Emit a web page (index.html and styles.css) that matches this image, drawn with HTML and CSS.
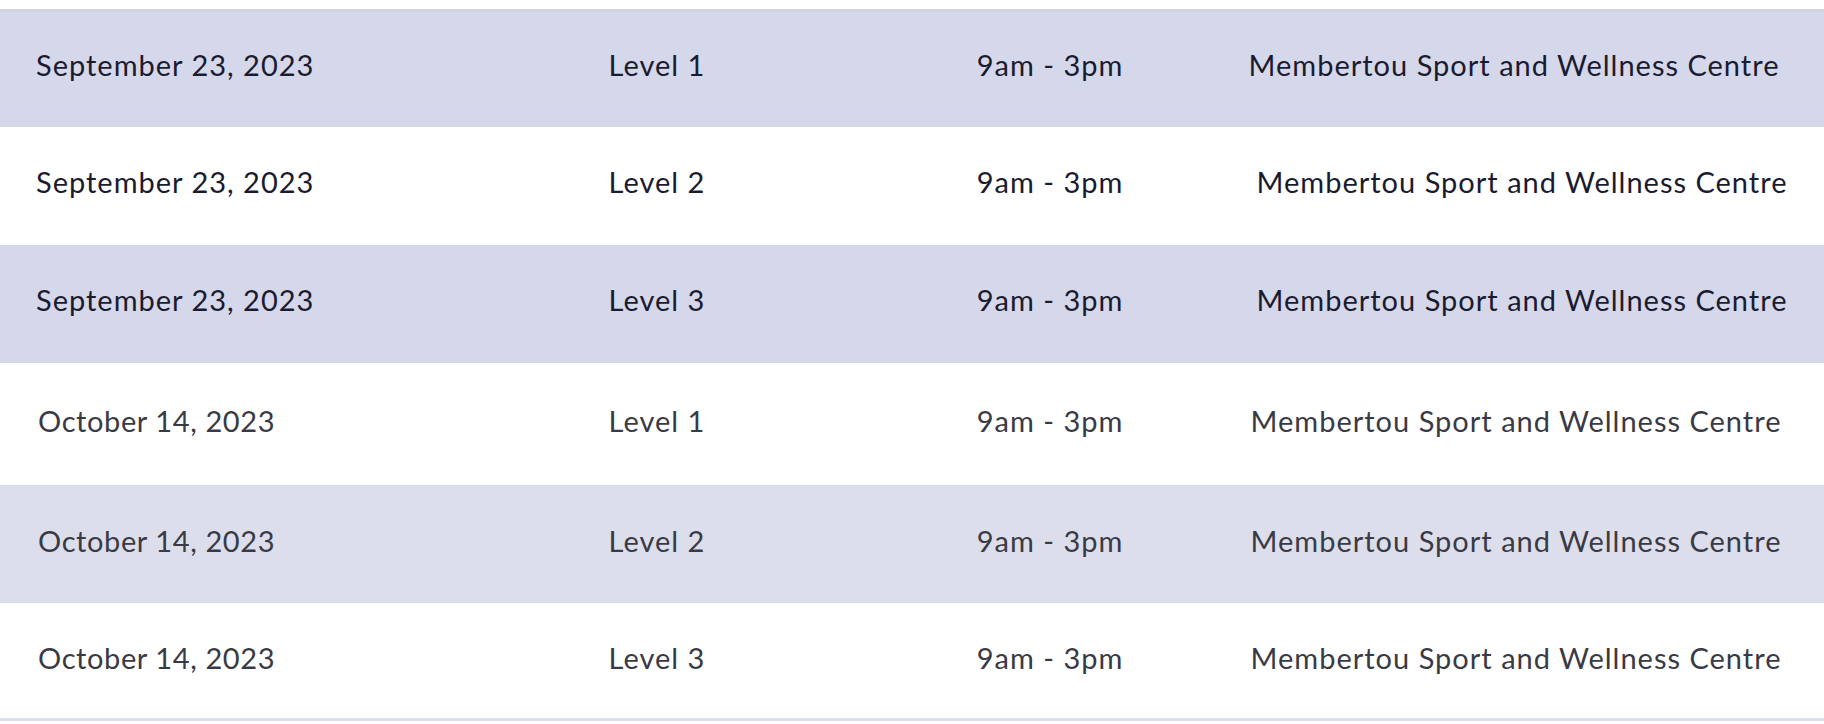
FILE: index.html
```html
<!DOCTYPE html>
<html>
<head>
<meta charset="utf-8">
<link rel="stylesheet" href="styles.css">
</head>
<body>
<div class="page">
  <div class="schedule schedule--sept">
    <div class="row row--shaded row--first">
      <div class="cell cell--date">September 23, 2023</div>
      <div class="cell cell--level">Level 1</div>
      <div class="cell cell--time">9am - 3pm</div>
      <div class="cell cell--place">Membertou Sport and Wellness Centre</div>
    </div>
    <div class="row">
      <div class="cell cell--date">September 23, 2023</div>
      <div class="cell cell--level">Level 2</div>
      <div class="cell cell--time">9am - 3pm</div>
      <div class="cell cell--place cell--place-shift">Membertou Sport and Wellness Centre</div>
    </div>
    <div class="row row--shaded">
      <div class="cell cell--date">September 23, 2023</div>
      <div class="cell cell--level">Level 3</div>
      <div class="cell cell--time">9am - 3pm</div>
      <div class="cell cell--place cell--place-shift">Membertou Sport and Wellness Centre</div>
    </div>
  </div>
  <div class="schedule schedule--oct">
    <div class="row row--tall">
      <div class="cell cell--date">October 14, 2023</div>
      <div class="cell cell--level">Level 1</div>
      <div class="cell cell--time">9am - 3pm</div>
      <div class="cell cell--place">Membertou Sport and Wellness Centre</div>
    </div>
    <div class="row row--shaded">
      <div class="cell cell--date">October 14, 2023</div>
      <div class="cell cell--level">Level 2</div>
      <div class="cell cell--time">9am - 3pm</div>
      <div class="cell cell--place">Membertou Sport and Wellness Centre</div>
    </div>
    <div class="row row--last">
      <div class="cell cell--date">October 14, 2023</div>
      <div class="cell cell--level">Level 3</div>
      <div class="cell cell--time">9am - 3pm</div>
      <div class="cell cell--place">Membertou Sport and Wellness Centre</div>
    </div>
  </div>
</div>
</body>
</html>
```
FILE: styles.css
```css
html, body {
  margin: 0;
  padding: 0;
  background: #ffffff;
}

.page {
  padding-top: 9px;
  font-family: "Lato", "Liberation Sans", sans-serif;
  font-size: 29px;
  font-weight: 400;
  letter-spacing: 1px;
}

.schedule--sept {
  color: #1b1b2f;
}

.schedule--oct {
  color: #3a3a45;
}

.row {
  display: grid;
  grid-template-columns: 414px 486px 300px 1fr;
  align-items: center;
  height: 118px;
  box-sizing: border-box;
}

.row--tall {
  height: 122px;
}

.schedule--sept .row--shaded {
  background: #d5d7ea;
}

.schedule--oct .row--shaded {
  background: #dcdeeb;
}

.row--first {
  border-top: 3px solid #d2d3e2;
}

.row--last {
  border-bottom: 3px solid #dcdeeb;
}

.cell {
  white-space: nowrap;
  padding-bottom: 10px;
}

.schedule--oct .cell {
  padding-bottom: 7px;
}

.cell--date {
  padding-left: 36px;
}

.schedule--oct .cell--date {
  padding-left: 38px;
  letter-spacing: 0.6px;
}

.cell--level,
.cell--time,
.cell--place {
  text-align: center;
}

.cell--place {
  padding-left: 4px;
}

.schedule--oct .cell--place {
  padding-left: 8px;
}

.cell--place-shift {
  padding-left: 20px;
}
```
